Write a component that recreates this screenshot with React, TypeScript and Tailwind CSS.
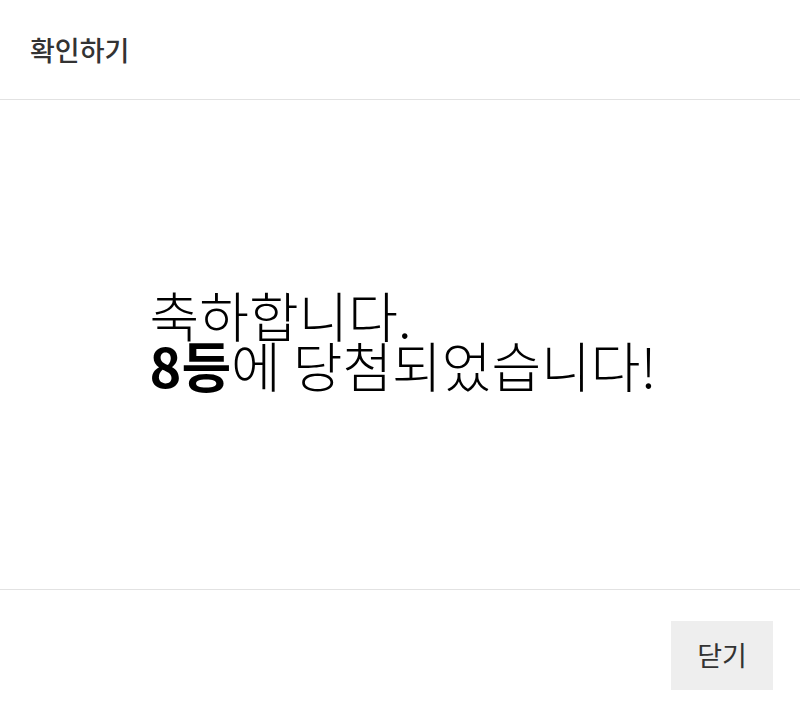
export default function App() {
  return (
    <div
      className="flex h-[710px] w-[800px] flex-col bg-white text-[#333]"
      style={{ fontFamily: '"Noto Sans CJK KR", "Noto Sans", sans-serif' }}
    >
      <header className="flex h-[100px] shrink-0 items-center border-b border-[#e2e2e2] px-[30px]">
        <h1 className="text-[27px] font-medium leading-none">확인하기</h1>
      </header>

      <main className="flex flex-1 items-center justify-center border-b border-[#e2e2e2] pb-[10px] pl-[6px]">
        <p className="text-[54px] font-light leading-[50px] text-black">
          축하합니다.
          <br />
          <b className="font-semibold">8등</b>에 당첨되었습니다!
        </p>
      </main>

      <footer className="flex h-[120px] shrink-0 justify-end px-[27px] pt-[31px]">
        <button className="h-[69px] w-[102px] bg-[#eeeeee] text-[27px] text-[#333]">닫기</button>
      </footer>
    </div>
  );
}
